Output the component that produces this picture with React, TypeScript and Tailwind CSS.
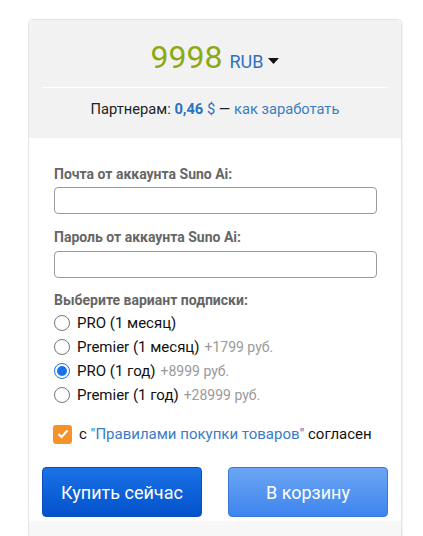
import { useState } from 'react';

const plans = [
  { id: 'pro1m', name: 'PRO (1 месяц)', extra: '' },
  { id: 'prem1m', name: 'Premier (1 месяц)', extra: '+1799 руб.' },
  { id: 'pro1y', name: 'PRO (1 год)', extra: '+8999 руб.' },
  { id: 'prem1y', name: 'Premier (1 год)', extra: '+28999 руб.' },
];

export default function App() {
  const [plan, setPlan] = useState('pro1y');
  const [agree, setAgree] = useState(true);

  return (
    <div className="min-h-[536px] bg-white pt-[19px] font-['Roboto','Liberation_Sans',sans-serif]">
      <div className="ml-[28px] w-[374px] rounded-t-[5px] border border-b-0 border-[#e4e4e4] shadow-[1px_0_2px_rgba(0,0,0,0.06)]">
        <div className="rounded-t-[5px] bg-[#f2f2f2] px-[13px] pb-[20px]">
          <div className="flex items-baseline justify-center pt-[19px] pb-[12px]">
            <span className="text-[32px] leading-[36px] text-[#8ba914]">9998</span>
            <button type="button" className="ml-[7px] flex items-center text-[18px] leading-none text-[#2b72c2]">
              RUB
              <svg width="11" height="6" viewBox="0 0 11 6" className="ml-[5px] mb-[3px]">
                <path d="M0 0 L11 0 L5.5 6 Z" fill="#111" />
              </svg>
            </button>
          </div>
          <div className="h-px bg-white" />
          <div className="pt-[12px] text-center text-[14.7px] leading-[18px] text-[#222]">
            Партнерам: <b className="font-bold text-[#2b72c2]">0,46</b>{' '}
            <span className="text-[#2b72c2]">$</span> —{' '}
            <a href="#" className="text-[#3a7cc3]">как заработать</a>
          </div>
        </div>

        <form className="px-[25px] pt-[27px] pb-[4px]" onSubmit={(e) => e.preventDefault()}>
          <label className="block text-[14px] font-bold leading-[18px] text-[#666]">Почта от аккаунта Suno Ai:</label>
          <input
            type="email"
            className="mt-[4px] block h-[27px] w-[323px] rounded-[4px] border border-[#9a9a9a] bg-white px-2 text-[14px] outline-none"
          />
          <label className="mt-[14px] block text-[14px] font-bold leading-[18px] text-[#666]">Пароль от аккаунта Suno Ai:</label>
          <input
            type="password"
            className="mt-[5px] block h-[27px] w-[323px] rounded-[4px] border border-[#9a9a9a] bg-white px-2 text-[14px] outline-none"
          />

          <div className="mt-[13px] text-[14px] font-bold leading-[18px] text-[#666]">Выберите вариант подписки:</div>
          <div className="mt-[2px] flex flex-col">
            {plans.map((p) => (
              <label key={p.id} className="flex h-[24px] cursor-pointer items-center text-[15px] leading-[18px] text-[#111]">
                <span
                  className={`mr-[7px] flex h-[16px] w-[16px] shrink-0 items-center justify-center rounded-full border ${
                    plan === p.id ? 'border-[#1a73e8]' : 'border-[#767676]'
                  } bg-white`}
                >
                  {plan === p.id && <span className="h-[10px] w-[10px] rounded-full bg-[#1a73e8]" />}
                </span>
                <input
                  type="radio"
                  name="plan"
                  className="hidden"
                  checked={plan === p.id}
                  onChange={() => setPlan(p.id)}
                />
                <span>{p.name}</span>
                {p.extra && <span className="ml-[5px] text-[14px] text-[#9a9a9a]">{p.extra}</span>}
              </label>
            ))}
          </div>

          <label className="mt-[17px] flex h-[20px] cursor-pointer items-center text-[15px] text-[#111]">
            <span
              onClick={() => setAgree(!agree)}
              className={`mr-[7px] -ml-px flex h-[19px] w-[19px] items-center justify-center rounded-[3px] ${
                agree ? 'bg-[#f5922a]' : 'border border-[#999] bg-white'
              }`}
            >
              {agree && (
                <svg width="12" height="10" viewBox="0 0 12 10">
                  <path d="M1.5 5 L4.5 8 L10.5 1.5" stroke="#fff" strokeWidth="2" fill="none" />
                </svg>
              )}
            </span>
            <span>
              с <a href="#" className="text-[#3a7cc3]">"Правилами покупки товаров"</a> согласен
            </span>
          </label>

          <div className="mt-[23px] -mx-[12px] flex justify-between">
            <button
              type="submit"
              className="h-[50px] w-[160px] rounded-[4px] border border-[#0a4fbf] bg-gradient-to-b from-[#1b72e6] to-[#0352cc] text-[18px] text-white"
            >
              Купить сейчас
            </button>
            <button
              type="button"
              className="h-[50px] w-[160px] rounded-[4px] border border-[#3b78d6] bg-gradient-to-b from-[#6ca6f3] to-[#3d84ee] text-[18px] text-white"
            >
              В корзину
            </button>
          </div>
        </form>
        <div className="h-[20px] bg-[#f7f7f7]" />
      </div>
    </div>
  );
}
